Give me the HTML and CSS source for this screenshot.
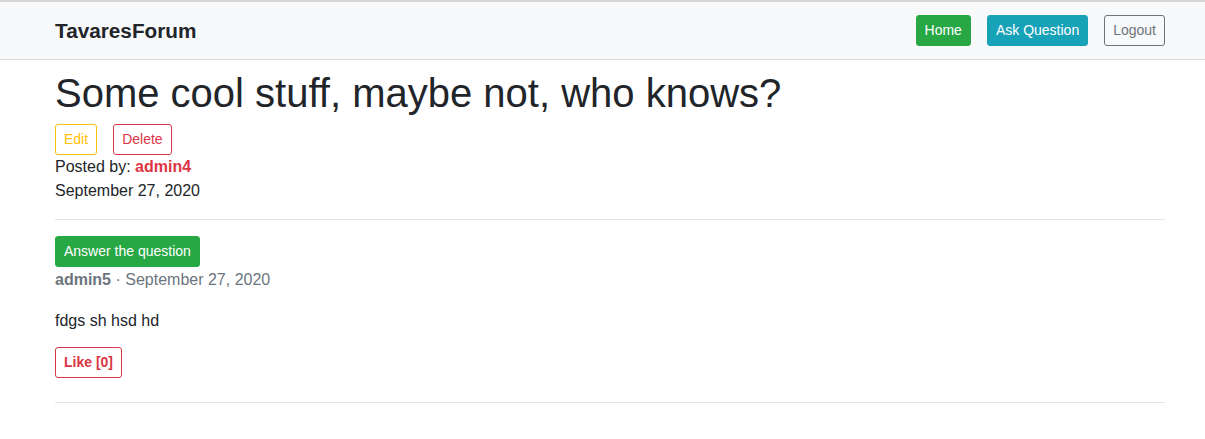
FILE: index.html
```html
<!DOCTYPE html>
<html lang="en">
<head>
<meta charset="utf-8">
<title>TavaresForum</title>
<link rel="stylesheet" href="styles.css">
</head>
<body>
<nav class="navbar">
  <div class="container nav-inner">
    <a class="brand" href="#">TavaresForum</a>
    <div class="nav-actions">
      <a class="btn btn-success" href="#">Home</a>
      <a class="btn btn-info" href="#">Ask Question</a>
      <a class="btn btn-outline-secondary" href="#">Logout</a>
    </div>
  </div>
</nav>
<main class="container">
  <h1 class="title">Some cool stuff, maybe not, who knows?</h1>
  <div class="post-actions">
    <a class="btn btn-outline-warning" href="#">Edit</a>
    <a class="btn btn-outline-danger" href="#">Delete</a>
  </div>
  <div class="meta">Posted by: <strong class="author">admin4</strong></div>
  <div class="meta">September 27, 2020</div>
  <hr class="divider">
  <a class="btn btn-success" href="#">Answer the question</a>
  <div class="answer">
    <div class="answer-meta"><strong>admin5</strong> · September 27, 2020</div>
    <p class="answer-body">fdgs sh hsd hd</p>
    <div class="like-row">
      <a class="btn btn-outline-danger btn-bold" href="#">Like [0]</a>
    </div>
  </div>
  <hr class="divider">
</main>
</body>
</html>
```

FILE: styles.css
```css
* { box-sizing: border-box; }

body {
  margin: 0;
  font-family: "Liberation Sans", Arial, sans-serif;
  font-size: 16px;
  line-height: 1.5;
  color: #212529;
  background: #fff;
}

.container {
  width: 1110px;
  margin-left: 55px;
}

.navbar {
  background: #f8f9fa;
  border-top: 2px solid #d4d4d4;
  border-bottom: 1px solid #d9d9d9;
  height: 60px;
}

.nav-inner {
  height: 57px;
  display: flex;
  align-items: center;
  justify-content: space-between;
}

.brand {
  font-size: 20.75px;
  font-weight: 700;
  color: #212529;
  text-decoration: none;
}

.nav-actions {
  display: flex;
  gap: 16px;
}

.btn {
  display: inline-block;
  font-size: 14px;
  line-height: 21px;
  padding: 4px 8px;
  border: 1px solid transparent;
  border-radius: 3px;
  text-decoration: none;
  font-weight: 400;
}

.btn-success { background: #28a745; border-color: #28a745; color: #fff; }
.btn-info { background: #17a2b8; border-color: #17a2b8; color: #fff; }
.btn-outline-secondary { border-color: #6c757d; color: #6c757d; }
.btn-outline-warning { border-color: #ffc107; color: #ffc107; }
.btn-outline-danger { border-color: #dc3545; color: #dc3545; }
.btn-bold { font-weight: 700; }

.title {
  font-size: 40px;
  font-weight: 400;
  line-height: 1.2;
  margin: 9px 0 7px;
}

.post-actions {
  display: flex;
  gap: 16px;
}

.author { color: #dc3545; }

.divider {
  border: 0;
  border-top: 1px solid rgba(0, 0, 0, 0.1);
  margin: 16px 0;
}

.answer-meta {
  color: #6c757d;
  margin-top: 1px;
}

.answer-body {
  margin: 17px 0 14px;
}

.like-row {
  padding-bottom: 8px;
}
```
